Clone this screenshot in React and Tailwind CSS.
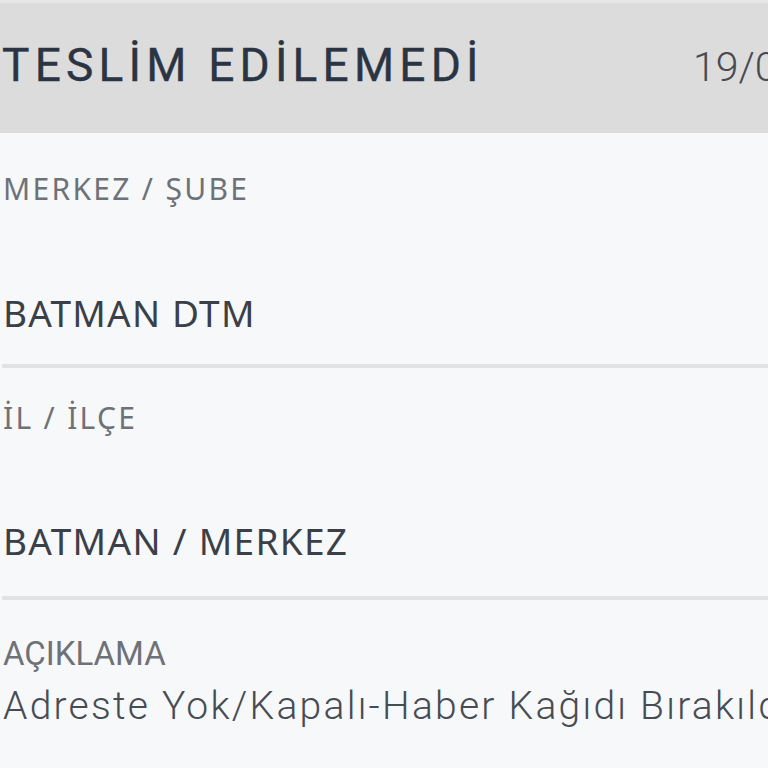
export default function App() {
  return (
    <div className="w-[768px] h-[768px] overflow-hidden bg-[#f7f8fa] flex flex-col" style={{ fontFamily: '"Noto Sans", sans-serif' }}>
      <div className="h-[133px] shrink-0 bg-[#dcdcdc] border-t-[3px] border-[#e6e6e6] flex items-center whitespace-nowrap overflow-hidden pb-[6px]">
        <div className="w-[693px] shrink-0 pl-[2px] text-[46px] leading-[50px] tracking-[5.2px] text-[#2a3443]" style={{ fontFamily: 'Roboto, sans-serif', WebkitTextStroke: '0.4px #2a3443' }}>TESLİM EDİLEMEDİ</div>
        <div className="shrink-0 text-[41px] leading-[44px] font-light text-[#474a4f] pt-[4px]" style={{ fontFamily: 'Roboto, sans-serif' }}>19/07/2024</div>
      </div>

      <div className="pt-[40px] pl-[3px]">
        <div className="text-[30px] leading-[32px] tracking-[2.3px] text-[#6e7277]">MERKEZ / ŞUBE</div>
        <div className="mt-[88px] text-[37px] leading-[40px] tracking-[1.2px] text-[#3b4048]">BATMAN DTM</div>
      </div>
      <div className="mt-[31px] ml-[2px] h-[4px] bg-[#e1e2e3]"></div>

      <div className="pt-[34px] pl-[3px]">
        <div className="text-[30px] leading-[32px] tracking-[2.3px] text-[#6e7277]">İL / İLÇE</div>
        <div className="mt-[87px] text-[37px] leading-[40px] tracking-[1.3px] text-[#3b4048]">BATMAN / MERKEZ</div>
      </div>
      <div className="mt-[35px] ml-[2px] h-[4px] bg-[#e1e2e3]"></div>

      <div className="pt-[36px] pl-[3px] whitespace-nowrap" style={{ fontFamily: 'Roboto, sans-serif' }}>
        <div className="text-[33px] leading-[36px] text-[#6e7277]">AÇIKLAMA</div>
        <div className="mt-[12px] text-[39px] leading-[44px] font-light tracking-[2.25px] text-[#474c53]">Adreste Yok/Kapalı-Haber Kağıdı Bırakıldı</div>
      </div>
    </div>
  );
}
